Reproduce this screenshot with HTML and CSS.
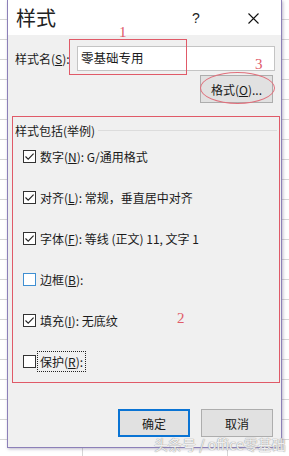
FILE: index.html
```html
<!DOCTYPE html>
<html lang="zh">
<head>
<meta charset="utf-8">
<link rel="stylesheet" href="styles.css">
</head>
<body>
<div class="sheet">
  <div class="dialog">
    <div class="titlebar">
      <span class="title">样式</span>
      <span class="tb-help">?</span>
      <span class="tb-close"><svg width="11" height="11" viewBox="0 0 11 11"><path d="M0.5 0.5 L10.5 10.5 M10.5 0.5 L0.5 10.5" stroke="#111" stroke-width="1.1" fill="none"/></svg></span>
    </div>
    <div class="name-row">
      <span class="name-label">样式名(<u>S</u>):</span>
      <div class="input">零基础专用</div>
    </div>
    <div class="fmt-row">
      <div class="btn">格式(<u>O</u>)...</div>
    </div>
    <div class="group">
      <div class="group-head"><span>样式包括(举例)</span><span class="group-line"></span></div>
      <div class="items">
        <div class="item"><span class="cb checked"><svg width="11" height="11" viewBox="0 0 11 11"><path d="M1.5 5.5 L4.2 8.2 L9.6 2.6" stroke="#222" stroke-width="1.1" fill="none"/></svg></span>数字(<u>N</u>): G/通用格式</div>
        <div class="item"><span class="cb checked"><svg width="11" height="11" viewBox="0 0 11 11"><path d="M1.5 5.5 L4.2 8.2 L9.6 2.6" stroke="#222" stroke-width="1.1" fill="none"/></svg></span>对齐(<u>L</u>): 常规，垂直居中对齐</div>
        <div class="item"><span class="cb checked"><svg width="11" height="11" viewBox="0 0 11 11"><path d="M1.5 5.5 L4.2 8.2 L9.6 2.6" stroke="#222" stroke-width="1.1" fill="none"/></svg></span>字体(<u>F</u>): 等线 (正文) 11, 文字 1</div>
        <div class="item"><span class="cb blue"></span>边框(<u>B</u>):</div>
        <div class="item"><span class="cb checked"><svg width="11" height="11" viewBox="0 0 11 11"><path d="M1.5 5.5 L4.2 8.2 L9.6 2.6" stroke="#222" stroke-width="1.1" fill="none"/></svg></span>填充(<u>I</u>): 无底纹</div>
        <div class="item"><span class="cb"></span><span class="focus">保护(<u>R</u>):</span></div>
      </div>
    </div>
    <div class="footer">
      <div class="btn btn-ok">确定</div>
      <div class="btn">取消</div>
    </div>
  </div>
  <div class="mark rect1"></div>
  <div class="mark num num1">1</div>
  <div class="mark num num3">3</div>
  <div class="mark ellipse"></div>
  <div class="mark rect2"></div>
  <div class="mark num num2">2</div>
  <div class="watermark">头条号 / office零基础</div>
</div>
</body>
</html>
```
FILE: styles.css
```css
html, body {
  margin: 0;
  padding: 0;
}
body {
  font-family: "Noto Sans CJK SC", "Noto Sans", sans-serif;
  font-size: 12px;
  color: #1a1a1a;
}
.sheet {
  position: relative;
  width: 289px;
  height: 456px;
  overflow: hidden;
  background:
    linear-gradient(to right, transparent 82px, #d6d6d6 82px, #d6d6d6 83px, transparent 83px),
    linear-gradient(to right, transparent 227px, #d6d6d6 227px, #d6d6d6 228px, transparent 228px),
    repeating-linear-gradient(to bottom, transparent 0, transparent 19px, #d6d6d6 19px, #d6d6d6 20px),
    #ffffff;
}
.dialog {
  margin-left: 7px;
  width: 275px;
  height: 448px;
  box-sizing: border-box;
  border: 1px solid #8c80b8;
  border-top: none;
  background: #f0f0f0;
  display: flex;
  flex-direction: column;
  box-shadow: 1px 1px 3px rgba(60, 50, 100, 0.35);
}
.titlebar {
  height: 35px;
  flex: none;
  background: #ffffff;
  display: flex;
  align-items: center;
  padding-left: 8px;
}
.title {
  font-size: 20px;
  line-height: 35px;
  color: #222;
}
.tb-help {
  margin-left: auto;
  width: 20px;
  text-align: center;
  font-size: 14px;
  font-family: "Liberation Sans", sans-serif;
  color: #222;
}
.tb-close {
  width: 20px;
  margin-left: 37px;
  margin-right: 18px;
  display: flex;
  justify-content: center;
  padding-top: 1px;
}
.name-row {
  margin-top: 11px;
  display: flex;
  align-items: center;
  padding-left: 7px;
}
.name-label {
  width: 62px;
  flex: none;
}
.input {
  width: 198px;
  height: 25px;
  box-sizing: border-box;
  background: #ffffff;
  border: 1px solid #c4c4c4;
  padding-left: 3px;
  line-height: 22px;
  font-size: 12.5px;
}
.fmt-row {
  margin-top: 4px;
  display: flex;
  justify-content: flex-end;
  padding-right: 8px;
}
.btn {
  width: 73px;
  height: 28px;
  box-sizing: border-box;
  background: #e1e1e1;
  border: 1px solid #adadad;
  display: flex;
  align-items: center;
  justify-content: center;
}
.group {
  margin-top: 18px;
  padding-left: 7px;
}
.group-head {
  display: flex;
  align-items: center;
  height: 18px;
}
.group-line {
  flex: 1;
  height: 1px;
  background: #dcdcdc;
  margin-left: 3px;
  margin-right: 4px;
}
.items {
  margin-top: 7px;
  padding-left: 8px;
  display: flex;
  flex-direction: column;
  gap: 21px;
}
.item {
  height: 20px;
  display: flex;
  align-items: center;
}
.cb {
  width: 13px;
  height: 13px;
  box-sizing: border-box;
  border: 1px solid #333;
  background: #ffffff;
  margin-right: 4px;
  display: flex;
  align-items: center;
  justify-content: center;
  flex: none;
}
.cb.blue {
  border-color: #3f8fd2;
}
.focus {
  outline: 1px dotted #222;
  outline-offset: 1px;
  padding: 0 1px;
  margin-left: -1px;
}
.footer {
  margin-top: auto;
  display: flex;
  justify-content: flex-end;
  gap: 11px;
  padding: 0 8px 10px 0;
}
.footer .btn {
  width: 72px;
}
.btn-ok {
  border: 2px solid #0a74d4;
}
.mark {
  position: absolute;
  box-sizing: border-box;
}
.rect1 {
  left: 69px;
  top: 39px;
  width: 118px;
  height: 36px;
  border: 1px solid #e05a68;
}
.rect2 {
  left: 12px;
  top: 116px;
  width: 268px;
  height: 267px;
  border: 1px solid #e05a68;
}
.ellipse {
  left: 200px;
  top: 72px;
  width: 75px;
  height: 32px;
  border: 1px solid #e0707c;
  border-radius: 50%;
}
.num {
  font-family: "Liberation Serif", serif;
  font-size: 15px;
  line-height: 15px;
  color: #e05a68;
}
.num1 {
  left: 119px;
  top: 25px;
}
.num3 {
  left: 255px;
  top: 57px;
}
.num2 {
  left: 177px;
  top: 311px;
}
.watermark {
  position: absolute;
  left: 154px;
  top: 436px;
  font-size: 14px;
  line-height: 17px;
  color: rgba(255, 255, 255, 0.85);
  text-shadow: 0 0 1px #9a9a9a, 0 0 1px #9a9a9a;
  white-space: nowrap;
}
```
